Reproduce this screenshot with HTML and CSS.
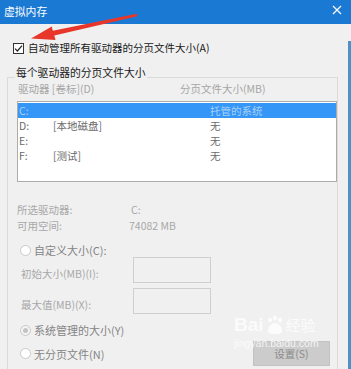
FILE: index.html
```html
<!DOCTYPE html>
<html lang="zh-CN">

<head>
    <meta charset="UTF-8">
    <meta name="viewport" content="width=device-width, initial-scale=1.0">
    <title>虚拟内存</title>
    <link rel="stylesheet" href="styles.css">
</head>

<body>

    <div class="window">
        <header class="titlebar">
            <span class="title">虚拟内存</span>
            <svg class="close" width="10" height="10" viewBox="0 0 10 10">
                <path d="M1 1L9 9M9 1L1 9" stroke="#fff" stroke-width="1.2" fill="none" />
            </svg>
        </header>

        <div class="content">
            <label class="auto-row">
                <span class="checkbox">
                    <svg width="9" height="9" viewBox="0 0 9 9">
                        <path d="M1 4.6L3.4 7L8 1.6" stroke="#222" stroke-width="1.2" fill="none" />
                    </svg>
                </span>
                自动管理所有驱动器的分页文件大小(A)
            </label>

            <div class="group">
                <div class="group-title">每个驱动器的分页文件大小</div>

                <div class="list-head">
                    <span class="col-drive">驱动器 [卷标](D)</span>
                    <span>分页文件大小(MB)</span>
                </div>

                <div class="drive-list">
                    <div class="drive-row selected">
                        <span class="col-letter">C:</span>
                        <span class="col-label"></span>
                        <span>托管的系统</span>
                    </div>
                    <div class="drive-row">
                        <span class="col-letter">D:</span>
                        <span class="col-label">[本地磁盘]</span>
                        <span>无</span>
                    </div>
                    <div class="drive-row">
                        <span class="col-letter">E:</span>
                        <span class="col-label"></span>
                        <span>无</span>
                    </div>
                    <div class="drive-row">
                        <span class="col-letter">F:</span>
                        <span class="col-label">[测试]</span>
                        <span>无</span>
                    </div>
                </div>

                <div class="info first">
                    <span class="info-label">所选驱动器:</span>
                    <span class="info-value">C:</span>
                </div>
                <div class="info">
                    <span class="info-label">可用空间:</span>
                    <span class="info-value shift">74082 MB</span>
                </div>

                <div class="radio-row custom">
                    <span class="radio"></span>
                    <span>自定义大小(C):</span>
                </div>

                <div class="size-row first">
                    <span class="size-label">初始大小(MB)(I):</span>
                    <span class="size-input"></span>
                </div>
                <div class="size-row">
                    <span class="size-label">最大值(MB)(X):</span>
                    <span class="size-input"></span>
                </div>

                <div class="radio-row system">
                    <span class="radio checked"></span>
                    <span>系统管理的大小(Y)</span>
                </div>

                <div class="bottom-row">
                    <div class="radio-row">
                        <span class="radio"></span>
                        <span>无分页文件(N)</span>
                    </div>
                    <button class="set-btn">设置(S)</button>
                </div>
            </div>
        </div>

        <!-- red pointer drawn over the screenshot -->
        <svg class="arrow" width="150" height="50" viewBox="0 0 150 50">
            <polygon points="31,38.5 55.5,40 54.3,35.6 137.3,16.3 136.7,13.7 52.8,30.8 51.8,26.4" fill="#e8372a" />
        </svg>

        <!-- watermark -->
        <div class="watermark">
            <div class="wm-logo">
                <span class="wm-bai">Bai</span>
                <svg class="wm-paw" width="20" height="20" viewBox="0 0 20 20">
                    <ellipse cx="5" cy="5" rx="2" ry="2.6" />
                    <ellipse cx="10" cy="3" rx="2" ry="2.6" />
                    <ellipse cx="15" cy="5" rx="2" ry="2.6" />
                    <path d="M3 16c0-5 4-8 7-8s7 3 7 8c0 2-2 3-7 3s-7-1-7-3z" />
                </svg>
                <span class="wm-jy">经验</span>
            </div>
            <div class="wm-url">jingyan.baidu.com</div>
        </div>
    </div>

</body>

</html>
```

FILE: styles.css
```css
body {
    margin: 0;
    font-family: "Noto Sans CJK SC", "Liberation Sans", sans-serif;
    font-size: 10.5px;
    color: #1a1a1a;
}

.window {
    position: relative;
    width: 351px;
    height: 369px;
    background-color: #f0f0f0;
    overflow: hidden;
}

.titlebar {
    height: 24px;
    background-color: #1a79d3;
    color: white;
    display: flex;
    align-items: center;
    justify-content: space-between;
    padding: 0 9px 0 4px;
}

.title {
    font-size: 10.8px;
    line-height: 14px;
    margin-top: -3px;
}

.close {
    margin-top: -4px;
}

.content {
    height: 345px;
    border-right: 3px solid #4b93c6;
    box-sizing: border-box;
}

.auto-row {
    display: flex;
    align-items: center;
    gap: 4px;
    margin: 17px 0 0 13px;
    line-height: 14px;
}

.checkbox {
    width: 9px;
    height: 9px;
    border: 1px solid #333;
    background-color: white;
    display: flex;
    align-items: center;
    justify-content: center;
}

.group {
    margin: 22px 0 0 7px;
    width: 331px;
    height: 400px;
    border: 1px solid #dadada;
    box-sizing: border-box;
}

.group-title {
    width: fit-content;
    margin: -13px 0 0 7px;
    padding: 0 1px;
    line-height: 14px;
    font-size: 10.8px;
    background-color: #f0f0f0;
    color: #1a1a1a;
}

.list-head {
    display: flex;
    margin: 3px 0 0 10px;
    line-height: 14px;
    color: #a6a6a6;
}

.col-drive {
    width: 162px;
}

.drive-list {
    margin: 5px 0 0 9px;
    height: 81px;
    border: 1px solid #acacac;
    background-color: white;
    box-sizing: border-box;
    padding-top: 1px;
}

.drive-row {
    display: flex;
    height: 15px;
    line-height: 15px;
    padding-left: 1px;
    color: #6a6a6a;
}

.drive-row.selected {
    background-color: #3496f7;
    color: #a9d0f6;
}

.col-letter {
    width: 34px;
}

.col-label {
    width: 157px;
}

.info {
    display: flex;
    margin-left: 9px;
    line-height: 16px;
    color: #a8a8a8;
}

.info.first {
    margin-top: 20px;
}

.info-label {
    width: 114px;
}

.info-value.shift {
    margin-left: -2px;
}

.radio-row {
    display: flex;
    align-items: center;
    gap: 3px;
    line-height: 14px;
    color: #858585;
    font-size: 11px;
}

.radio-row.custom {
    margin: 9px 0 0 12px;
}

.radio-row.system {
    margin: 9px 0 0 12px;
}

.radio {
    width: 9px;
    height: 9px;
    border: 1px solid #c9c9c9;
    border-radius: 50%;
    background-color: white;
    display: flex;
    align-items: center;
    justify-content: center;
}

.radio.checked {
    background-color: #f4f4f4;
}

.radio.checked::after {
    content: "";
    width: 5px;
    height: 5px;
    border-radius: 50%;
    background-color: #c4c4c4;
}

.size-row {
    display: flex;
    margin: 5px 0 0 13px;
    height: 26px;
    color: #a8a8a8;
}

.size-row.first {
    margin-top: 0;
}

.size-label {
    width: 112px;
    line-height: 14px;
    margin-top: 10px;
}

.size-input {
    width: 78px;
    height: 26px;
    border: 1px solid #cfcfcf;
    box-sizing: border-box;
    background-color: #f0f0f0;
}

.bottom-row {
    display: flex;
    align-items: center;
    justify-content: space-between;
    margin: 4px 7px 0 12px;
}

.set-btn {
    width: 77px;
    height: 25px;
    border: 1px solid #c2c2c2;
    background-color: #cccccc;
    color: #8a8a8a;
    font-family: inherit;
    font-size: 10.5px;
    padding: 0;
}

.arrow {
    position: absolute;
    left: 0;
    top: 0;
}

.watermark {
    position: absolute;
    left: 234px;
    top: 314px;
    color: rgba(255, 255, 255, 0.8);
}

.wm-logo {
    display: flex;
    align-items: center;
    gap: 1px;
    height: 22px;
    line-height: 22px;
}

.wm-bai {
    font-family: "Liberation Sans", sans-serif;
    font-weight: bold;
    font-size: 19px;
}

.wm-paw {
    fill: rgba(255, 255, 255, 0.8);
}

.wm-jy {
    font-size: 15px;
}

.wm-url {
    font-family: "Liberation Sans", sans-serif;
    font-size: 10.5px;
    line-height: 12px;
    margin-top: 1px;
}
```
